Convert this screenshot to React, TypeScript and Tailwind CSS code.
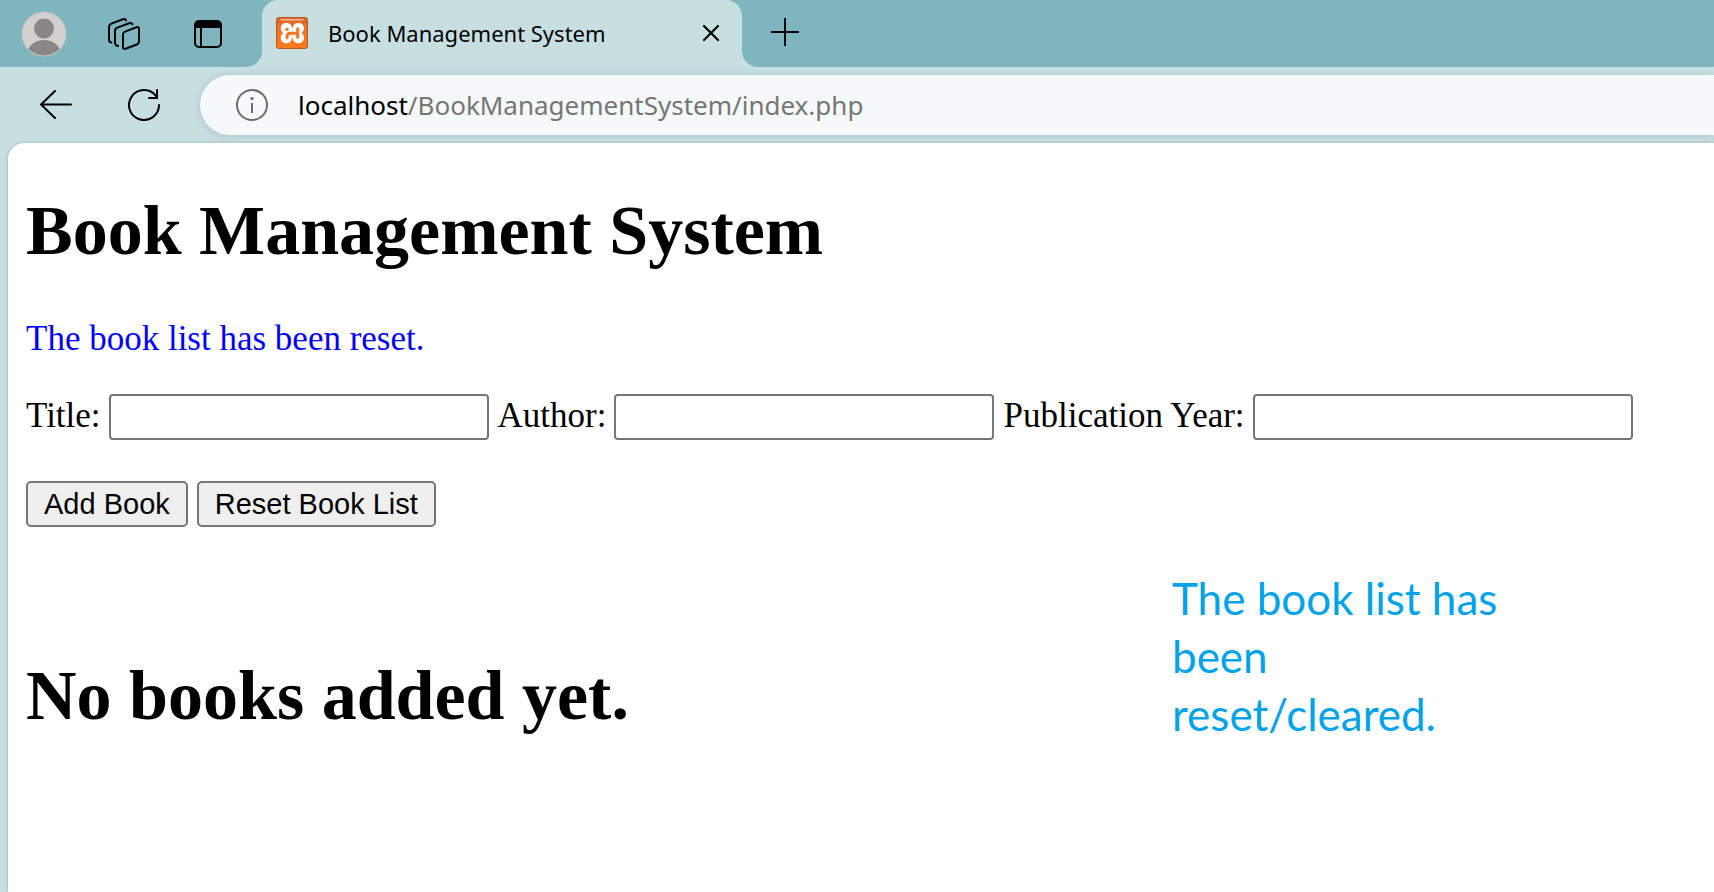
import { useState } from "react";

function Avatar() {
  return (
    <svg viewBox="0 0 46 46" className="size-[46px]" aria-hidden="true">
      <defs>
        <clipPath id="avatar-clip">
          <circle cx="23" cy="23" r="21.5" />
        </clipPath>
      </defs>
      <circle cx="23" cy="23" r="22.5" fill="#c4c4c2" />
      <circle cx="23" cy="23" r="21.5" fill="#d2d0ce" />
      <g clipPath="url(#avatar-clip)" fill="#8a8684">
        <circle cx="23" cy="17.5" r="10" />
        <path d="M4 46C7 34 14 29 23 29s16 5 19 17z" />
      </g>
    </svg>
  );
}

function WorkspacesIcon() {
  return (
    <svg viewBox="0 0 34 34" className="size-[34px]" fill="none" stroke="#000" strokeWidth="2" strokeLinecap="round" strokeLinejoin="round" aria-hidden="true">
      <path d="M4.500 25.500Q2 25.500 2 22.500V10Q2 7.500 4.300 6.600L16 2.200Q18.500 1.400 19 3.500" />
      <path d="M11 29Q8 28.500 8 25.500V13.800Q8 11.500 10.300 10.600L22 6.200Q24.500 5.400 25.500 7.300" />
      <path d="M18 14.600L29.500 10.200Q32 9.400 32 12V24.300Q32 26.600 29.800 27.500L18.500 31.800Q16 32.600 16 30V17.600Q16 15.400 18 14.600z" />
    </svg>
  );
}

function TabActionsIcon() {
  return (
    <svg viewBox="0 0 28 28" className="size-7" aria-hidden="true">
      <rect x="1" y="1" width="26" height="26" rx="4" fill="none" stroke="#000" strokeWidth="2" />
      <path d="M1 8V5a4 4 0 0 1 4-4h18a4 4 0 0 1 4 4v3z" />
      <path d="M7 7v20" stroke="#000" strokeWidth="2" />
    </svg>
  );
}

function XamppIcon() {
  return (
    <svg viewBox="0 0 96 96" className="size-8 shrink-0" aria-hidden="true">
      <defs>
        <linearGradient id="xampp-fill" x1="0" y1="0" x2="0" y2="1">
          <stop offset="0" stopColor="#d0622a" />
          <stop offset="0.25" stopColor="#ee7024" />
          <stop offset="1" stopColor="#ff7a1c" />
        </linearGradient>
      </defs>
      <rect x="1.500" y="1.500" width="93" height="93" rx="7" fill="url(#xampp-fill)" stroke="#b9571c" strokeWidth="3" />
      <path d="M9 5H87Q84 11 76 11H20Q12 11 9 5z" fill="#f0a880" />
      <g fill="#fff">
        <circle cx="31" cy="34" r="17" />
        <circle cx="67" cy="34" r="17" />
        <circle cx="31" cy="62" r="17" />
        <circle cx="67" cy="62" r="17" />
        <rect x="21" y="34" width="56" height="28" />
      </g>
      <circle cx="33" cy="37" r="5" fill="#f9751f" />
      <path d="M33 62Q33 49 43 49H65M65 35V61" fill="none" stroke="#f9751f" strokeWidth="9" strokeLinecap="round" strokeLinejoin="round" />
      <path d="M11 44L20 49L11 54zM87 44L80 49L87 54z" fill="#f9751f" />
    </svg>
  );
}

function TabCorner({ className }: { className: string }) {
  return (
    <svg viewBox="0 0 16 16" className={className} aria-hidden="true">
      <path d="M16 0V16H0A16 16 0 0 0 16 0z" fill="#c8dfe2" />
    </svg>
  );
}

const fields = [
  { id: "title", label: "Title:" },
  { id: "author", label: "Author:" },
  { id: "year", label: "Publication Year:" },
];

const buttonClass =
  "h-[46px] rounded-[5px] border-2 border-[#767676] bg-[#efefef] px-4 font-['Liberation_Sans',Arial,sans-serif] text-[29px] leading-[40px] text-black";

export default function App() {
  const [values, setValues] = useState<Record<string, string>>({});

  return (
    <div className="flex min-h-screen flex-col bg-[#c8dfe2] text-black">
      <header className="font-['Noto_Sans','Open_Sans',sans-serif]">
        <div className="flex h-[67px] bg-[#7eb5bf]">
          <div className="flex items-center pl-[21px]">
            <button aria-label="Profile"><Avatar /></button>
            <button aria-label="Workspaces" className="ml-10"><WorkspacesIcon /></button>
            <button aria-label="Tab actions" className="ml-[53px]"><TabActionsIcon /></button>
          </div>
          <div className="relative ml-10 flex w-[480px] items-center rounded-t-2xl bg-[#c8dfe2] pr-[19px] pb-0.5 pl-[14px]">
            <TabCorner className="absolute bottom-0 -left-4 size-4" />
            <TabCorner className="absolute -right-4 bottom-0 size-4 -scale-x-100" />
            <XamppIcon />
            <span className="ml-5 flex-1 text-[22px] leading-8 whitespace-nowrap">Book Management System</span>
            <button aria-label="Close tab">
              <svg viewBox="0 0 24 24" className="size-6" stroke="#000" strokeWidth="2.200" strokeLinecap="round" aria-hidden="true">
                <path d="M5 5l14 14M19 5L5 19" />
              </svg>
            </button>
          </div>
          <button aria-label="New tab" className="ml-[29px] pb-[3px]">
            <svg viewBox="0 0 28 28" className="size-7" stroke="#000" strokeWidth="2" aria-hidden="true">
              <path d="M14 0v28M0 14h28" />
            </svg>
          </button>
        </div>
        <div className="flex h-[76px] items-center pl-10">
          <button aria-label="Back">
            <svg viewBox="0 0 32 32" className="size-8" fill="none" stroke="#000" strokeWidth="2" strokeLinecap="round" strokeLinejoin="round" aria-hidden="true">
              <path d="M15 2L1 15.500L15 29M1 15.500H31" />
            </svg>
          </button>
          <button aria-label="Refresh" className="ml-14">
            <svg viewBox="0 0 32 32" className="size-8" fill="none" stroke="#000" strokeWidth="2" strokeLinecap="round" aria-hidden="true">
              <path d="M31 16A15 15 0 1 1 28 7L29 9M29 1V9H21" />
            </svg>
          </button>
          <div className="ml-10 flex h-[60px] flex-1 items-center rounded-l-full bg-[#f5f9fa] pl-9 shadow-[0_1px_8px_rgba(60,110,120,0.22)]">
            <svg viewBox="0 0 32 32" className="size-8" fill="none" stroke="#6b6b6b" strokeWidth="2" aria-hidden="true">
              <circle cx="16" cy="16" r="15" />
              <path d="M16 14v10" />
              <circle cx="16" cy="9.500" r="1.600" fill="#6b6b6b" stroke="none" />
            </svg>
            <a href="#" className="ml-[30px] text-[26px] leading-9 text-[#767676]">
              <span className="text-black">localhost</span>/BookManagementSystem/index.php
            </a>
          </div>
        </div>
      </header>

      <main className="relative ml-2 flex-1 rounded-tl-2xl bg-white px-[18px] pt-12 pb-16 font-['Liberation_Serif','Times_New_Roman',serif] text-[35px] leading-10 shadow-[0_0_3px_rgba(60,90,100,0.4)]">
        <h1 className="text-[70px] leading-[80px] font-bold">Book Management System</h1>
        <p className="mt-12 text-[#0000ff]">The book list has been reset.</p>
        <form onSubmit={(e) => e.preventDefault()}>
          <div className="mt-[35px] flex flex-wrap items-baseline gap-[9px]">
            {fields.map((f) => (
              <div key={f.id} className="flex items-baseline gap-2">
                <label htmlFor={f.id}>{f.label}</label>
                <input
                  id={f.id}
                  type="text"
                  value={values[f.id] ?? ""}
                  onChange={(e) => setValues({ ...values, [f.id]: e.target.value })}
                  className="h-[46px] w-[380px] rounded-[4px] border-2 border-[#767676] bg-white px-1 font-['Liberation_Sans',Arial,sans-serif] text-[29px] leading-[40px]"
                />
              </div>
            ))}
          </div>
          <div className="mt-[41px] flex gap-[9px]">
            <button type="submit" className={buttonClass}>Add Book</button>
            <button type="button" className={buttonClass} onClick={() => setValues({})}>Reset Book List</button>
          </div>
        </form>
        <h2 className="mt-[129px] text-[70px] leading-[80px] font-bold">No books added yet.</h2>
        <p className="absolute top-[426px] left-[1164px] w-[350px] font-[Lato,Calibri,sans-serif] text-[44px] leading-[58px] text-[#00a2e8]">
          The book list has been reset/cleared.
        </p>
      </main>
    </div>
  );
}
